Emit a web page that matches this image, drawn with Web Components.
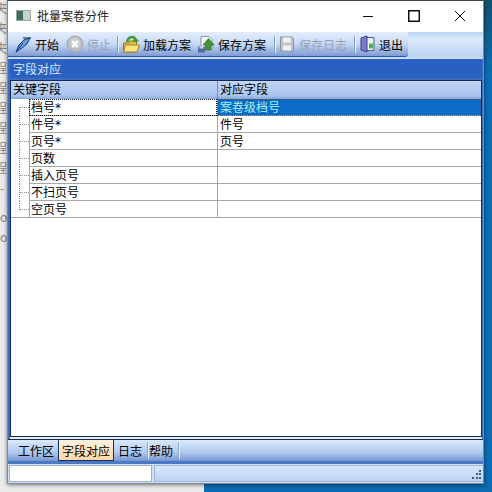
<!DOCTYPE html>
<html lang="zh"><head><meta charset="utf-8">
<style>
html,body{margin:0;padding:0;width:492px;height:492px;overflow:hidden;background:#0b6cb4}
body{font-family:"Noto Sans CJK SC","Liberation Sans",sans-serif;font-size:12px;color:#000}
</style></head><body>
<desktop-bg>
<app-window heading="批量案卷分件">
<tool-bar slot="toolbar">
<tool-button icon="pen" label="开始"></tool-button>
<tool-button icon="stop" label="停止" disabled></tool-button>
<tool-sep style="margin-left:2px"></tool-sep>
<tool-button icon="folder" label="加载方案"></tool-button>
<tool-button icon="save" label="保存方案" style="margin-left:-1px"></tool-button>
<tool-sep style="margin-left:4px"></tool-sep>
<tool-button icon="disk" label="保存日志" disabled style="margin-left:-1px"></tool-button>
<tool-sep style="margin-left:3px"></tool-sep>
<tool-button icon="door" label="退出" style="margin-left:-1px"></tool-button>
</tool-bar>
<panel-title slot="panel">字段对应</panel-title>
<field-grid slot="panel"></field-grid>
<tab-bar slot="tabs"></tab-bar>
<status-bar slot="status"></status-bar>
</app-window>
</desktop-bg>
<script>
const def=(n,html,fn)=>customElements.define(n,class extends HTMLElement{connectedCallback(){if(this.shadowRoot)return;const r=this.attachShadow({mode:'open'});r.innerHTML=html;fn&&fn(this,r)}});
const icons={
pen:'<path d="M2 17 L5 10 L10 5 L16 3 L13 9 L8 13 Z" fill="#6f9ede" stroke="#143a86"/><path d="M2 17 L9 8" stroke="#143a86"/><path d="M9 3h8" stroke="#143a86" stroke-width="1.2"/>',
stop:'<circle cx="9" cy="9" r="8" fill="#b9bdc3" stroke="#a2a7ae"/><circle cx="9" cy="8" r="5.5" fill="#c9ccd1"/><path d="M6.2 6.2l5.6 5.6M11.8 6.2l-5.6 5.6" stroke="#fff" stroke-width="2.4"/>',
folder:'<path d="M1.5 8h5l1-2h7v11h-13z" fill="#e8bd45" stroke="#8f7420"/><path d="M1.5 17l2-7h14l-2.5 7z" fill="#f9e27f" stroke="#a58526"/><path d="M5 7 C6 2 10 1 13 3" fill="none" stroke="#3d9a34" stroke-width="2.4"/><path d="M11 7.5l1-6.5 5 5z" fill="#3d9a34"/>',
save:'<path d="M4 1.5h8l3 3v10H4z" fill="#f4f6fa" stroke="#8b93a8"/><path d="M1 11.5h7v6H1z" fill="#55689c"/><path d="M2.5 11.5h4v2h-4z" fill="#d5dbe8"/><path d="M8.5 15V10H6l5.5-6.500 5.500 6.500h-3v5z" fill="#3e9a34" stroke="#226b1d" stroke-width=".7"/>',
disk:'<path d="M2.500 2h11.500l1.500 1.500v12.500h-13z" fill="#c0c4ca" stroke="#8e939b"/><path d="M5 2.500h7.500v5H5z" fill="#f1f2f4"/><path d="M5 10.500h8v5H5z" fill="#f1f2f4"/>',
door:'<path d="M6 2.500h10v13H6z" fill="#eef3f8" stroke="#4c5a86"/><path d="M11 8.500h4v5h-4z" fill="#52b44a"/><path d="M3 3l6-2v16l-6-2z" fill="#7d7ac6" stroke="#3e3d8a"/>'
};
def('desktop-bg',`<style>
:host{display:block;position:relative;width:492px;height:492px;overflow:hidden;background:linear-gradient(#14506a,#0b6cb4 14%)}
.l{position:absolute;left:0;top:0;width:204px;height:492px;background:#ececec;color:#858585;font:12px/20px "Noto Sans CJK SC",sans-serif;margin:0;box-sizing:border-box}
.l div{margin-left:-5px}.l .t{margin-top:-2px}.l .o{margin-left:0}.l .g{margin-top:9px}
.w{position:absolute;left:7px;top:0;width:477px;height:484px}
</style><div class="l"><div class="t">夹</div><div>夹</div><div>夹</div><div>程</div><div>程</div><div>程</div><div>程</div><div>程</div><div>程</div><div class="o">-</div><div class="o g">o</div><div class="o">o</div></div><div class="w"><slot></slot></div>`);
def('app-window',`<style>
:host{display:flex;flex-direction:column;height:100%;background:#3d6cc0;box-shadow:0 1px 4px rgba(0,0,0,.5);box-sizing:border-box;border:1px solid #7f8997;border-top-color:#444}
.t{height:31px;padding-bottom:2px;box-sizing:border-box;background:#fff;display:flex;align-items:center;flex:none}
.ic{width:15px;height:11px;margin:0 6px 0 8px;flex:none;box-sizing:border-box;background:linear-gradient(90deg,#3d6f5f 0 45%,#c6d2d0 45%);border:1px solid #9aa6a6}
.tt{font-size:12px;flex:1;color:#222}
.c{width:46px;height:29px;display:flex;align-items:center;justify-content:center;flex:none}
.m{height:27px;flex:none;background:linear-gradient(#bad3f3,#dcebfb 25%,#bcd3f2 90%,#d3e2f7)}
.p{flex:1;display:flex;flex-direction:column;min-height:0;padding:0 1px 0 2px;background:#3d6cc0}
</style><div class="t"><div class="ic"></div><div class="tt"></div>
<div class="c"><svg width="12" height="12"><path d="M1 6.500h10" stroke="#111"/></svg></div>
<div class="c"><svg width="12" height="12"><rect x=".75" y=".75" width="10.500" height="10.500" fill="none" stroke="#111" stroke-width="1.500"/></svg></div>
<div class="c"><svg width="12" height="12"><path d="M1 1l10 10M11 1L1 11" stroke="#111"/></svg></div></div>
<div class="m"><slot name="toolbar"></slot></div>
<div class="p"><slot name="panel"></slot></div>
<slot name="tabs"></slot><slot name="status"></slot>`,(h,r)=>{r.querySelector('.tt').textContent=h.getAttribute('heading')});
def('tool-bar',`<style>:host{display:flex;align-items:center;gap:1px;height:25px;width:400px;padding-left:3px;box-sizing:border-box;background:linear-gradient(#e3eefc,#c6d9f4 50%,#7d9bd4);border-bottom:1px solid #2d59a8;border-radius:0 0 3px 0}</style><slot></slot>`);
def('tool-button',`<style>:host{display:inline-flex;align-items:center;gap:3px;height:24px;padding:0 3px;white-space:nowrap;font-size:12px;color:#000}:host([disabled]){color:#98a2b4}svg{flex:none}</style><svg width="18" height="18" viewBox="0 0 18 18"></svg><span></span>`,(h,r)=>{r.querySelector('span').textContent=h.getAttribute('label');r.querySelector('svg').innerHTML=icons[h.getAttribute('icon')]});
def('tool-sep',`<style>:host{display:block;width:1px;height:17px;background:#7f99bf;box-shadow:1px 0 #eef5fd;flex:none}</style>`);
def('panel-title',`<style>:host{display:block;height:19px;line-height:19px;padding-left:3px;background:#2a60c2;color:#dfeaff;font-size:12px;flex:none}</style><slot></slot>`);
def('field-grid',`<style>
:host{display:flex;flex-direction:column;flex:1;min-height:0;background:#fff;border:1px solid #17294f;margin:2px 0;box-shadow:0 2px 0 #e4ecf8;font-size:12px;color:#000;line-height:16px}
.r{display:grid;grid-template-columns:18px 188px 1fr;height:17px;flex:none}
.h{grid-template-columns:206px 1fr;height:18px;background:linear-gradient(#c2d6f5,#a9c5ef 80%,#8aa6d6)}
.h div{padding-left:2px}.h div+div{border-left:1px solid #6f8ab8}
.n,.v{border-left:1px solid #a7a7a7;border-bottom:1px solid #a7a7a7;padding-left:1px}
.n em{font:12px/0 "DejaVu Sans",sans-serif}
.v{padding-left:2px}
.tr{position:relative}
.tr:before{content:"";position:absolute;left:8px;right:0;top:8px;border-top:1px dotted #8a8a8a}
.tr:after{content:"";position:absolute;left:8px;top:0;height:17px;border-left:1px dotted #8a8a8a}
.f .tr:after{top:8px;height:9px}
.e .tr:after{height:9px}
.e .tr{border-bottom:1px solid #a7a7a7;height:16px}
.f .n{outline:1px dotted #111;outline-offset:-1px}
.f .v{background:#0a6cc8;color:#a6f5ee;outline:1px dotted #3d5a78;outline-offset:-1px}
</style><div class="r h"><div>关键字段</div><div>对应字段</div></div><div id="b"></div>`,(h,r)=>{
const d=[['档号*','案卷级档号'],['件号*','件号'],['页号*','页号'],['页数',''],['插入页号',''],['不扫页号',''],['空页号','']];
r.getElementById('b').innerHTML=d.map((x,i)=>`<div class="r${i?'':' f'}${i==6?' e':''}"><div class="tr"></div><div class="n">${x[0].replace('*','<em>*</em>')}</div><div class="v">${x[1]}</div></div>`).join('')});
def('tab-bar',`<style>
:host{display:flex;align-items:stretch;height:25px;box-sizing:border-box;background:linear-gradient(#dbe9fb,#adc8ef 60%,#7697d2);border-top:1px solid #1d2c4a;border-bottom:3px solid #4a78c2;font-size:12px;color:#000;flex:none}
span{display:flex;align-items:center}
.w{padding:0 4px 0 10px}
.a{background:linear-gradient(#fff3e2,#ffd6a4);border:1px solid #15305f;border-top:0;padding:0 3px}
.p{padding:0 5px 0 4px}.q{padding:0 5px 0 1px}
i{display:block;width:1px;height:17px;align-self:center;background:#8fa7c8;box-shadow:1px 0 #eaf2fc}
</style><span class="w">工作区</span><span class="a">字段对应</span><span class="p">日志</span><i></i><span class="q">帮助</span><i></i>`);
def('status-bar',`<style>
:host{display:flex;gap:2px;height:19px;padding:1px 0 1px 1px;box-sizing:border-box;background:#cfe0f6;flex:none;font-size:0}
.a{width:143px;background:#fff;border:1px solid #9fb0c8;box-sizing:border-box}
.b{flex:1;background:linear-gradient(#d8e8fb,#bcd3f2);border:1px solid #9fb6d8;border-right:0;box-sizing:border-box;display:flex;justify-content:flex-end;align-items:flex-end}
</style><div class="a"></div><div class="b"><svg width="12" height="12"><g fill="#42597f"><rect x="8" y="1" width="2" height="2"/><rect x="5" y="4" width="2" height="2"/><rect x="8" y="4" width="2" height="2"/><rect x="1" y="8" width="2" height="2"/><rect x="5" y="8" width="2" height="2"/><rect x="8" y="8" width="2" height="2"/></g></svg></div>`);
</script></body></html>
